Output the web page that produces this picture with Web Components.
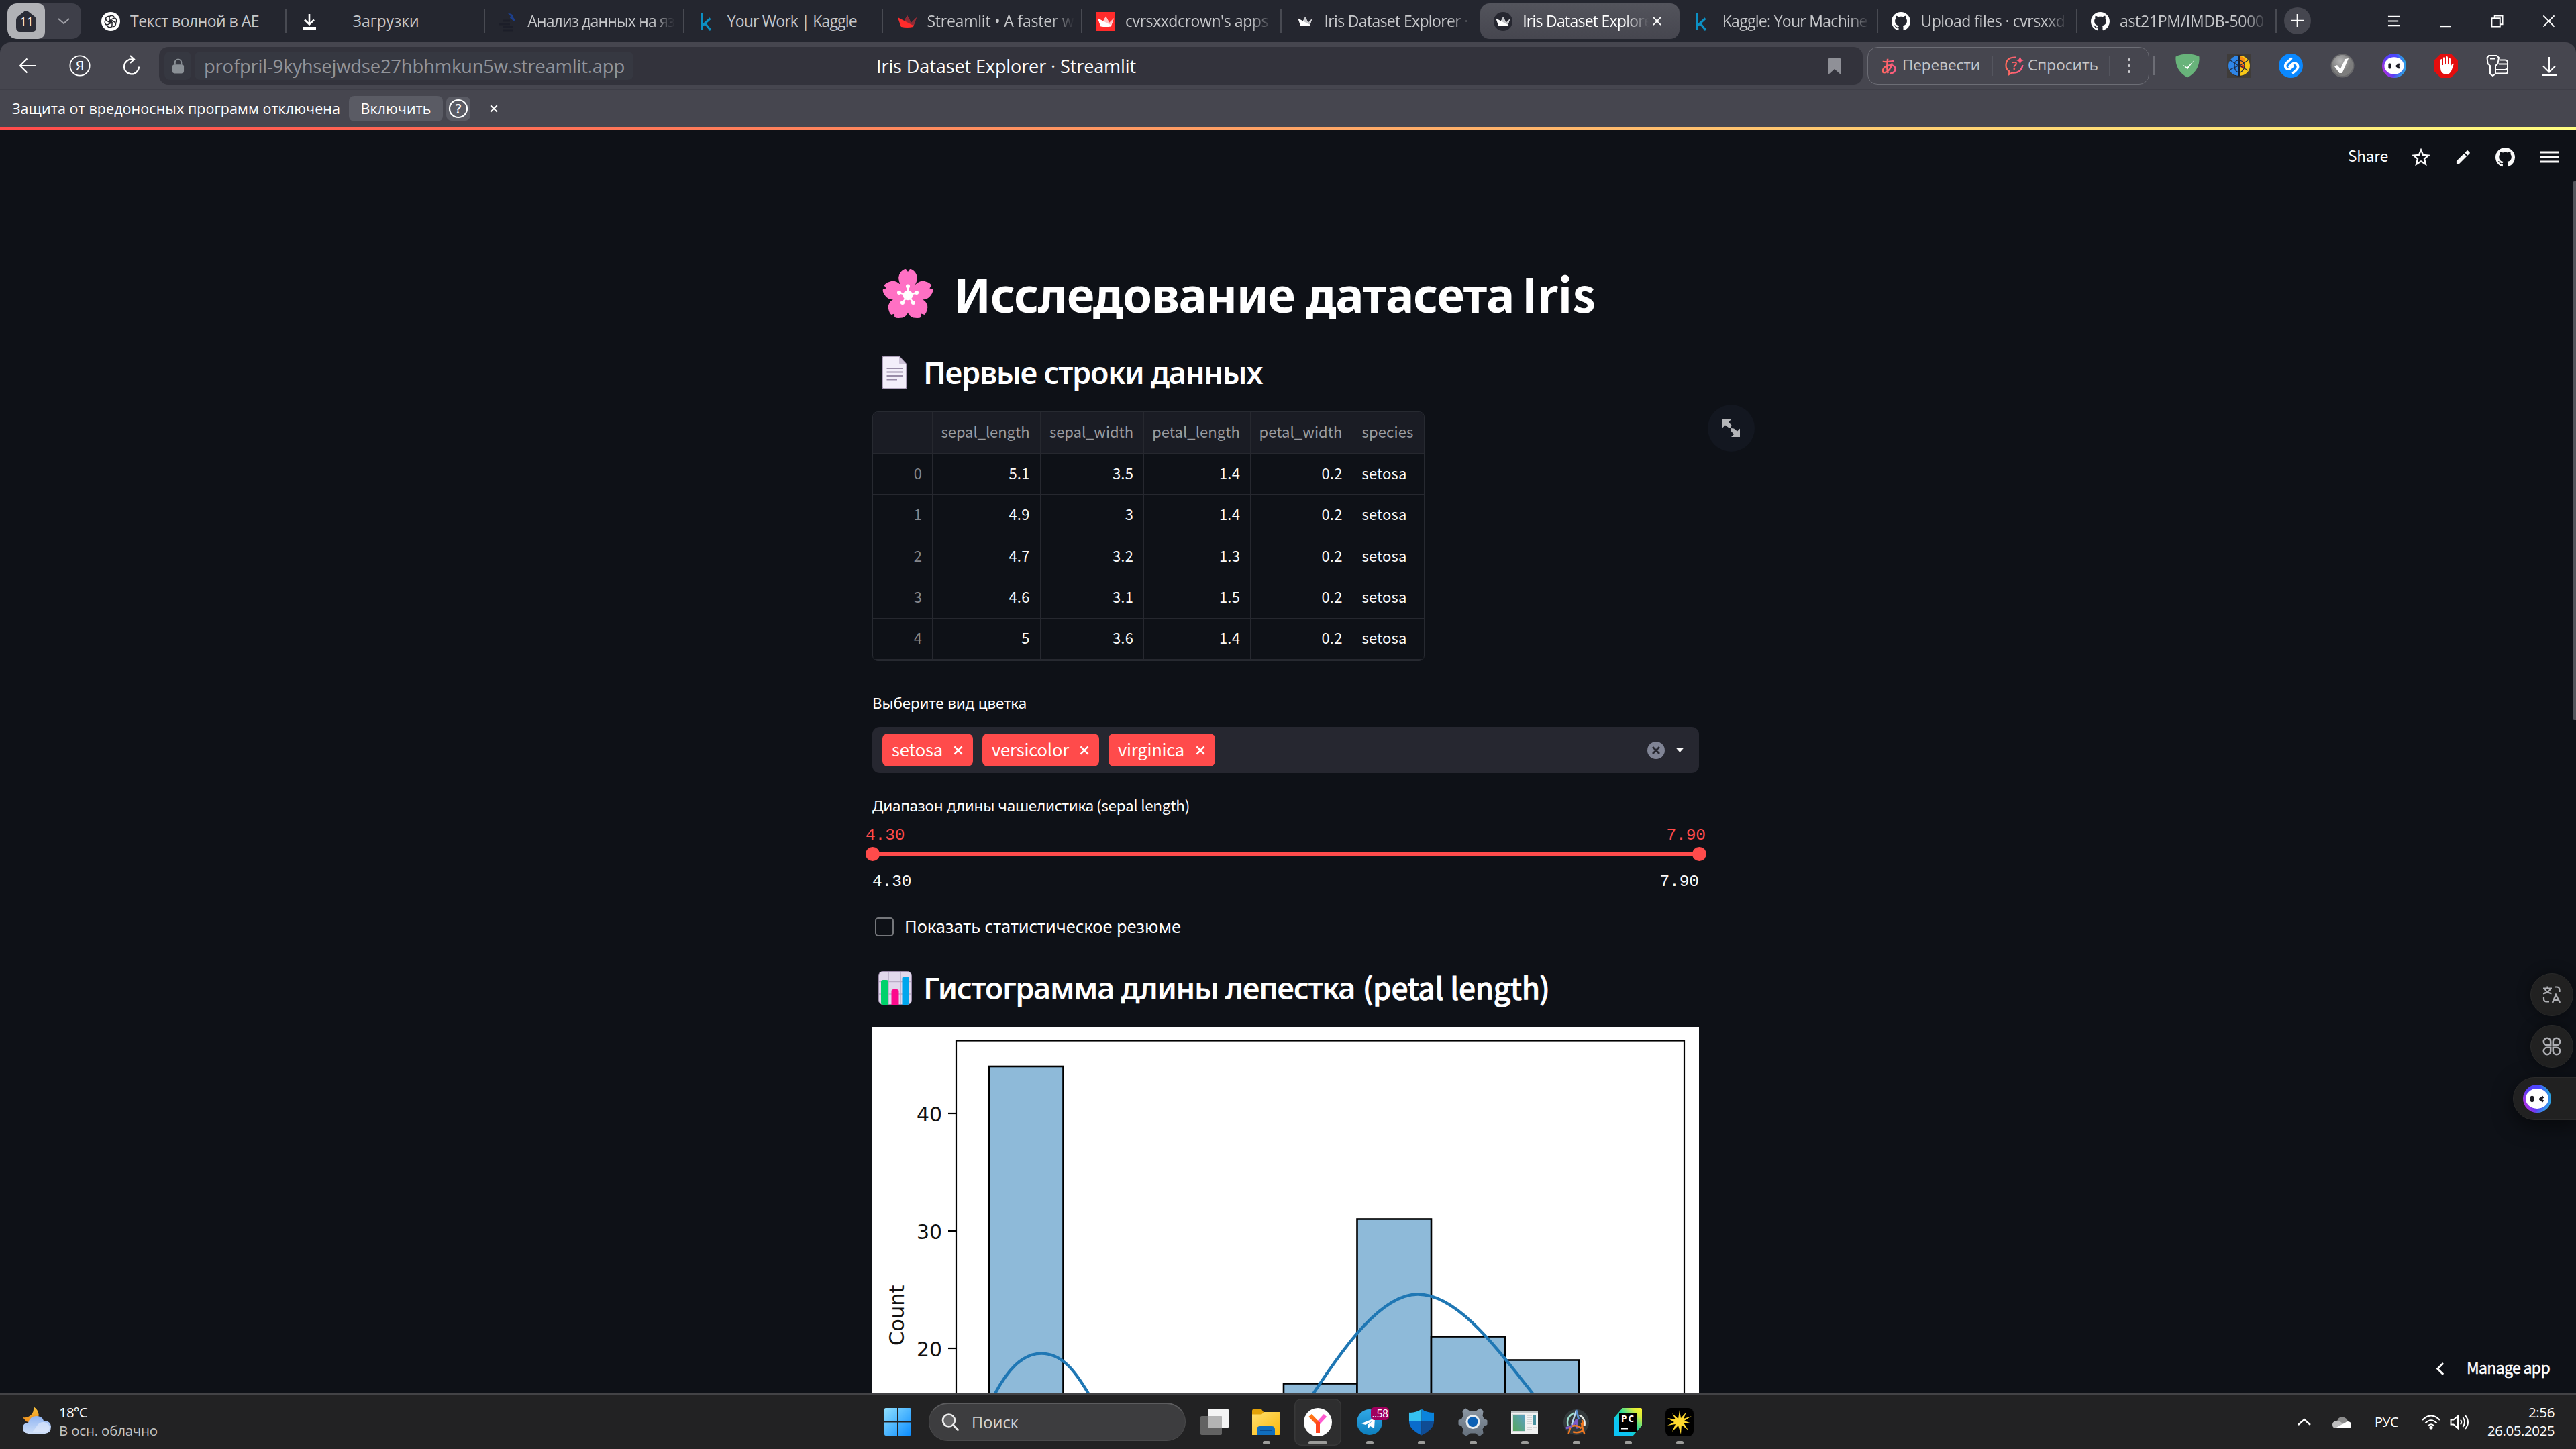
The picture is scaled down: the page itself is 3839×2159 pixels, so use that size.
<!DOCTYPE html>
<html lang="ru">
<head>
<meta charset="utf-8">
<title>Iris Dataset Explorer · Streamlit</title>
<style>
html,body{margin:0;padding:0;background:#0e1117;overflow:hidden}
body{width:3839px;height:2159px;display:flex;flex-direction:column;font-family:"Open Sans","Noto Sans",sans-serif}
</style>
</head>
<body>
<browser-tabs></browser-tabs>
<browser-toolbar></browser-toolbar>
<info-bar></info-bar>
<app-page></app-page>
<task-bar></task-bar>
<script>
const GH='<path fill="currentColor" d="M8 0C3.58 0 0 3.58 0 8c0 3.54 2.29 6.53 5.47 7.59.4.07.55-.17.55-.38 0-.19-.01-.82-.01-1.49-2.01.37-2.53-.49-2.69-.94-.09-.23-.48-.94-.82-1.13-.28-.15-.68-.52-.01-.53.63-.01 1.08.58 1.23.82.72 1.21 1.87.87 2.33.66.07-.52.28-.87.51-1.07-1.78-.2-3.64-.89-3.64-3.95 0-.87.31-1.59.82-2.15-.08-.2-.36-1.02.08-2.12 0 0 .67-.21 2.2.82.64-.18 1.32-.27 2-.27.68 0 1.36.09 2 .27 1.53-1.04 2.2-.82 2.2-.82.44 1.1.16 1.92.08 2.12.51.56.82 1.27.82 2.15 0 3.07-1.87 3.75-3.65 3.95.29.25.54.73.54 1.48 0 1.07-.01 1.93-.01 2.2 0 .21.15.46.55.38A8.013 8.013 0 0016 8c0-4.42-3.58-8-8-8z"/>';
const crown=(a,b,c)=>`<path fill="${a}" d="M0 6L8 14 14 3 20 14 28 6 23 20H5z"/><path fill="${b}" d="M14 3L20 14 28 6 23 18 8 14z"/><path fill="${c}" d="M0 6L23 18 23 20Q14 22 5 20z"/>`;
const face='<defs><linearGradient id="f" x1="0" y1=".8" x2="1" y2=".3"><stop offset="0" stop-color="#c32ee0"/><stop offset=".35" stop-color="#5a3df5"/><stop offset=".75" stop-color="#4a46ff"/><stop offset="1" stop-color="#20b8d8"/></linearGradient><linearGradient id="g" x1=".3" y1=".5" x2=".9" y2="1"><stop offset=".5" stop-color="#20d0d8" stop-opacity="0"/><stop offset="1" stop-color="#20d8d0"/></linearGradient></defs><circle cx="18" cy="18" r="18" fill="url(#f)"/><circle cx="18" cy="18" r="18" fill="url(#g)"/><ellipse cx="18" cy="18" rx="14.6" ry="12.8" fill="#fff"/><rect x="9.4" y="14.4" width="4.4" height="8" rx="2" fill="#1b1b24"/><path d="M26 15.5l-4.2 3 4.2 3" fill="none" stroke="#1b1b24" stroke-width="2.8" stroke-linejoin="round"/>';
const S='fill="none" stroke="currentColor"';
/* name: [viewBox, markup] */
const ICONS={
home:['0 0 30 32','<path fill="#2a2c36" d="M15 0Q17 0 19 2L28 9Q30 11 30 14V25Q30 31 24 31H6Q0 31 0 25V14Q0 11 2 9L11 2Q13 0 15 0z"/>'],
chev:['0 0 20 12',`<path ${S} stroke-width="2" d="M2 2l8 7 8-7"/>`],
gpt:['0 0 28 28','<circle cx="14" cy="14" r="14" fill="#fff"/><g fill="none" stroke="#25262c" stroke-width="1.5"><path d="M12 13V8.6Q12 5.4 15 5.2 18 5.2 19.4 8M12 13l4.5 2.6"/><g><path transform="rotate(60 14 14)" d="M12 13V8.6Q12 5.4 15 5.2 18 5.2 19.4 8M12 13l4.5 2.6"/><path transform="rotate(120 14 14)" d="M12 13V8.6Q12 5.4 15 5.2 18 5.2 19.4 8M12 13l4.5 2.6"/><path transform="rotate(180 14 14)" d="M12 13V8.6Q12 5.4 15 5.2 18 5.2 19.4 8M12 13l4.5 2.6"/><path transform="rotate(240 14 14)" d="M12 13V8.6Q12 5.4 15 5.2 18 5.2 19.4 8M12 13l4.5 2.6"/><path transform="rotate(300 14 14)" d="M12 13V8.6Q12 5.4 15 5.2 18 5.2 19.4 8M12 13l4.5 2.6"/></g></g>'],
dl:['0 0 28 28','<path fill="none" stroke="#fff" stroke-width="2.6" d="M14 3v15M7 11.5l7 7 7-7"/><path fill="#fff" d="M4 22h20v4H4z"/>'],
stepik:['0 0 28 28','<g fill="none" stroke="#1c1e29" stroke-width="3"><path d="M0 18h17M7 13h10M7 22h15M7 27h14"/></g><path fill="#1c3f8d" d="M14 2q8 0 8 6l3 4-3 2q-2-4-5-5l1-3z"/>'],
kag:['0 0 28 28','<path fill="none" stroke="#0c90c4" stroke-width="3.200" d="M8 1v26M20.500 9.500L9 20M12.500 16.500L21 27"/>'],
crownR:['0 0 28 28',`<g transform="translate(0 2)">${crown('#c8343c','#8e2b36','#ff2b2b')}</g>`],
crownSq:['0 0 28 28',`<path fill="#ff2b2b" d="M0 0h28v28H0z"/><g transform="translate(2 4) scale(.86)">${crown('#fff','#ffc4c4','#fff')}</g>`],
crownK:['0 0 28 28',`<circle cx="14" cy="14" r="14" fill="#262730"/><g transform="translate(3.5 5) scale(.76)">${crown('#fff','#c4c5c9','#fff')}</g>`],
gh:['0 0 16 16',GH],
x:['0 0 20 20',`<path ${S} stroke-width="2" d="M1.5 1.5l17 17M18.500 1.500l-17 17"/>`],
xs:['0 0 14 14',`<path ${S} stroke-width="2" d="M1 1l12 12M13 1L1 13"/>`],
xb:['0 0 20 20',`<path ${S} stroke-width="3.4" d="M2 2l16 16M18 2L2 18"/>`],
plus:['0 0 20 20',`<path ${S} stroke-width="1.8" d="M10 0v20M0 10h20"/>`],
burger:['0 0 20 20',`<path ${S} stroke-width="2.2" d="M1 3h18M1 10h16M1 17h18"/>`],
min:['0 0 20 20',`<path ${S} stroke-width="2.4" d="M1.500 18h17"/>`],
rest:['0 0 20 20',`<path ${S} stroke-width="2" d="M1.500 5.500h13v13h-13zM6 5V1.500h12.500V15H15"/>`],
back:['0 0 32 32',`<path ${S} stroke-width="2.2" d="M29 16H5M15.500 5.500L5 16l10.500 10.500"/>`],
ya:['0 0 32 32',`<circle cx="16" cy="16" r="14.600" ${S} stroke-width="1.900"/><text x="16" y="23" text-anchor="middle" font-size="20" font-family="Open Sans" fill="currentColor">Я</text>`],
reload:['0 0 32 32',`<path ${S} stroke-width="2.200" d="M17 6.500A11 11 0 1 0 27 17.500M12 6.500h8M14 1l6 5.500-6 5.500"/>`],
lock:['0 0 20 24','<path fill="none" stroke="#8a9096" stroke-width="2.200" d="M5 10V6.500a5 5 0 0110 0V10"/><rect x="1" y="9.500" width="18" height="14" rx="3.500" fill="#8a9096"/>'],
mark:['0 0 18 25','<path fill="#8f9097" d="M0 2Q0 0 2 0H16Q18 0 18 2V25L9 17 0 25z"/>'],
ask:['0 0 28 28','<defs><linearGradient id="a"><stop stop-color="#ff6a5a"/><stop offset="1" stop-color="#ff5a8a"/></linearGradient></defs><path fill="none" stroke="url(#a)" stroke-width="2.200" d="M16 1.500Q1.500 1 1.500 14 1.500 19 6.500 22.500L6 27 10.500 24.500Q24 25.500 26.500 13"/><path fill="#ff5a7a" d="M22.500 0l1.700 4.300L28 6l-3.800 1.700L22.500 12l-1.700-4.300L17 6l3.800-1.700z"/><text x="14" y="19.500" text-anchor="middle" font-size="17" font-family="Open Sans" font-weight="600" fill="#ff6268">?</text>'],
shield:['0 0 36 36','<path fill="#68b37a" d="M18 .500Q28 .500 35.500 4.500Q37 25 18 35.500Q-1 25 .500 4.500Q8 .500 18 .500z"/><path fill="#fff" d="M10.500 16l7 4.500L28.500 9 18 23.500z"/>'],
brain:['0 0 36 36','<path fill="#3f3c3a" d="M0 0h36v36H0z"/><circle cx="18" cy="18" r="15.500" fill="#1b1a1a"/><path fill="#2f86e8" d="M17 3A15 15 0 0 0 17 33z"/><path fill="#f8c818" d="M19 3A15 15 0 0 1 19 33z"/><path fill="#fb8c12" d="M19 4q9 1 8 9l-8 6z"/><path fill="#e8381c" d="M19 19l5-3 3 4-3 3z"/><g fill="none" stroke="#1c2a44" stroke-width="1.200"><path d="M17 18L5 10M17 18L4 24M17 10q-6 0-6 8t6 10M19 18l12-8M19 18l12 7M19 10q7 2 7 8t-6 10M18 3v30"/></g>'],
shaz:['0 0 36 36','<circle cx="18" cy="18" r="18" fill="#0a88ff"/><g fill="none" stroke="#fff" stroke-width="3.600" stroke-linecap="round"><path d="M18.500 7.500l-7 6.500q-4 4.500 0 8 3.200 2.500 6.500-.500l3-2.800"/><path d="M21.500 28.500l4-3.500q5.500-5 1.500-9.500-3.500-3-7 .200l-4 3.600" /></g>'],
gray:['0 0 36 36','<defs><radialGradient id="r" cx=".4" cy=".3"><stop stop-color="#b5b5b5"/><stop offset="1" stop-color="#7d7d7d"/></radialGradient></defs><circle cx="18" cy="18" r="17.500" fill="#6a6a6c"/><circle cx="18" cy="17.500" r="15.500" fill="url(#r)"/><path fill="#fff" d="M6 19l4-2 5 5.500L22 8l5-1-9.500 22h-4z"/>'],
face:['0 0 36 36',face],
stop:['0 0 36 36','<path fill="#e40d0d" d="M10.500 0h15L36 10.500v15L25.500 36h-15L0 25.500v-15z"/><path fill="#fff" d="M10 10q0-2 1.500-2t1.500 2v7h1V7q0-2 1.500-2t1.500 2v9h1V6q0-2 1.500-2T21 6v10h1V8.500q0-2 1.500-2t1.500 2V20l2-4q1-2 3-1l-3.500 10q-2 5.500-8 5.500-8.500 0-8.500-9z"/>'],
key:['0 0 36 36',`<g ${S} stroke-width="2"><path d="M5 3h12l3 3-1.500 9-3.500 3v12l-4 3-4-3V18l-3.500-3L2.500 6zM7 7.500h8"/><path d="M21 9.500h8q4 0 4 4V27q0 2.500-3 2.500H16M20 15.500h13M16 24h13q4-.500 4-3"/></g>`],
down:['0 0 36 36',`<path ${S} stroke-width="2" d="M18 5v22M9 18.500l9 9 9-9M7 32h22"/>`],
q:['0 0 36 36',`<circle cx="18" cy="18" r="13" ${S} stroke-width="2.200"/><text x="18" y="25" text-anchor="middle" font-size="19" font-family="Open Sans" font-weight="600" fill="currentColor">?</text>`],
star:['0 0 28 28',`<path ${S} stroke-width="2.400" stroke-linejoin="miter" d="M14 3.500l3.100 7.400 8 .700-6.100 5.300 1.900 7.800L14 20.500l-6.900 4.200L9 16.900l-6.100-5.300 8-.700z"/>`],
pen:['0 0 24 24','<path fill="currentColor" d="M1 18.500V23h4.500L17.500 11 13 6.500zM19 9.500l3.500-3.500q.700-.800 0-1.500l-3-3q-.700-.700-1.500 0L14.500 5z"/>'],
menu:['0 0 28 20',`<path ${S} stroke-width="3" d="M0 3h28M0 10h28M0 17h28"/>`],
flower:['0 0 76 76','<g fill="#ff70c4"><path d="M38 38Q18 18 27 6Q31 1 35 1L38 5L41 1Q45 1 49 6Q58 18 38 38z"/><path transform="rotate(72 38 40)" d="M38 40Q18 20 27 8Q31 2 35 2L38 6L41 2Q45 2 49 8Q58 20 38 40z"/><path transform="rotate(144 38 40)" d="M38 40Q16 20 25 8Q31 2 35 2L38 6L41 2Q45 2 51 8Q60 20 38 40z"/><path transform="rotate(216 38 40)" d="M38 40Q16 20 25 8Q31 2 35 2L38 6L41 2Q45 2 51 8Q60 20 38 40z"/><path transform="rotate(288 38 40)" d="M38 40Q18 20 27 8Q31 2 35 2L38 6L41 2Q45 2 49 8Q58 20 38 40z"/><circle cx="38" cy="40" r="18"/></g><g stroke="#fff" stroke-width="2.500" fill="#fff"><circle cx="38" cy="40" r="6"/><path d="M38 40V27M38 40l13-4M38 40l8 11M38 40l-8 11M38 40l-13-4"/><circle cx="38" cy="26.500" r="1.800"/><circle cx="51" cy="36" r="1.800"/><circle cx="46" cy="51" r="1.800"/><circle cx="30" cy="51" r="1.800"/><circle cx="25" cy="36" r="1.800"/></g>'],
doc:['0 0 38 50','<path fill="#f3eefa" stroke="#9a8ba8" stroke-width="1.500" d="M3 1H26L37 13V47Q37 49 35 49H3Q1 49 1 47V3Q1 1 3 1z"/><path fill="#cdc2d8" d="M26 1L37 13H28Q26 13 26 11z"/><path fill="none" stroke="#998ca8" stroke-width="1.900" d="M7.500 19h24M7.500 24.500h24M7.500 30h24M7.500 35.500h15.500"/>'],
bars:['0 0 50 50','<rect x=".5" y=".5" width="49" height="49" rx="6" fill="#e1d8ec" stroke="#9b8aa9"/><path stroke="#b9acc6" stroke-width="1.500" d="M15 1v48M33 1v48M1 15.500h48M1 34h48"/><path fill="#00d26a" d="M4 16q0-3 3-3h5q3 0 3 3v34H7q-3 0-3-3z"/><path fill="#fc0a8c" d="M19.500 30q0-3 3-3h5q3 0 3 3v20h-11z"/><path fill="#00a6ed" d="M35.500 11q0-3 3-3h4q3 0 3 3v36q0 3-3 3h-7z"/>'],
expand:['0 0 26 26','<path fill="#b4b5b8" d="M0 0h13L9 4l4.500 4.500-1 4-3.500-.500L4 8.500 0 12.500zM26 26H13l4-4-4.500-5 .500-4 4 .500L22 17.500l4-4z"/>'],
clear:['0 0 26 26','<circle cx="13" cy="13" r="13" fill="#808495"/><path stroke="#262730" stroke-width="2.800" d="M8 8l10 10M18 8L8 18"/>'],
caret:['0 0 14 8','<path fill="#fafafa" d="M0 0h14L7 8z"/>'],
tr:['0 0 28 28','<g fill="none" stroke="#aeafb4" stroke-width="2.200"><path d="M1 4.500h13M7.500 1.500v3M3.500 5q1.500 5 10 7.500M12 5q-2 5-11 7.500M18 2.500h3q4.500 0 4.500 4.500v3M2 17v3.500q0 4 4.500 4H10"/><path d="M15 26l5-12 6 12M17 22h8" stroke-width="2.500"/></g>'],
clover:['0 0 28 28','<g fill="none" stroke="#aeafb4" stroke-width="2.600"><path d="M12.200 12.200H7a5.200 5.200 0 1 1 5.200-5.200zM15.800 12.200V7a5.200 5.200 0 1 1 5.200 5.200zM12.200 15.800V21A5.200 5.200 0 1 1 7 15.800zM15.800 15.800H21a5.200 5.200 0 1 1-5.200 5.200z"/></g>'],
left:['0 0 14 22',`<path ${S} stroke-width="3.200" d="M12 2L3 11l9 9"/>`],
weather:['0 0 42 40','<defs><linearGradient id="w" x2="0" y2="1"><stop stop-color="#f7c33c"/><stop offset="1" stop-color="#f08a18"/></linearGradient><linearGradient id="c" x2="0" y2="1"><stop stop-color="#8fb4f2"/><stop offset="1" stop-color="#cfdff8"/></linearGradient></defs><path fill="url(#w)" d="M16 0Q26 6 23 17T5 22L0 16Q8 17 12.500 12T16 0z"/><path fill="url(#c)" d="M8 40Q0 39 0 31.500T8 24Q11 14 20 14t11 7q10-.500 11 8.500 0 9.500-9 10.500z"/><path fill="#e2ebfb" opacity=".6" d="M20 30q4-8 12-7 8 2 8 9-2 6-8 6H14z"/>'],
win:['0 0 40 41','<defs><linearGradient id="b" x2="1" y2="1"><stop stop-color="#90e0ff"/><stop offset="1" stop-color="#0a8cff"/></linearGradient></defs><path fill="url(#b)" d="M2 0h17v19.500H0V2Q0 0 2 0zM21 0h17q2 0 2 2v17.500H21zM0 21.500h19V41H2q-2 0-2-2zM21 21.500h19V39q0 2-2 2H21z"/>'],
search:['0 0 26 26','<circle cx="11" cy="10.500" r="9" fill="#646466" stroke="#ececec" stroke-width="2.600"/><path stroke="#ececec" stroke-width="3" stroke-linecap="round" d="M17.500 17l7 7.500"/>'],
views:['0 0 42 40','<rect x="11" y="0" width="31" height="29" rx="2" fill="#f4f4f4"/><rect x="0" y="11" width="32" height="28" rx="2" fill="#626262"/><path fill="#b4b4b4" d="M11 11h19q2 0 2 2v16H11z"/>'],
folder:['0 0 42 38','<defs><linearGradient id="d" x2="1" y2="1"><stop stop-color="#ffdf70"/><stop offset="1" stop-color="#fbb90a"/></linearGradient></defs><path fill="#e2a108" d="M0 2Q0 0 2 0h12l3 4h25v10H0z"/><path fill="url(#d)" d="M0 7.500h14L18 4h23q1 0 1 1v31q0 2-2 2H0z"/><path fill="#106ebe" d="M7 38V30q0-5 5-5h17q5 0 5 5v8z"/><path stroke="#0a4c90" stroke-width="2" d="M12 31h17"/>'],
yb:['0 0 42 42','<defs><linearGradient id="y1" x2="0" y2="1"><stop stop-color="#ff7a14"/><stop offset="1" stop-color="#ff2d20"/></linearGradient></defs><circle cx="21" cy="21" r="21" fill="#fff"/><path fill="none" stroke="#ff5ad0" stroke-width="6" d="M21 23L32 11"/><path fill="none" stroke="url(#y1)" stroke-width="6" d="M9.500 11L21 23V37" /><path stroke="#ff4420" stroke-width="6" d="M21 21v16"/>'],
tg:['0 0 38 38','<defs><linearGradient id="t" x2="0" y2="1"><stop stop-color="#31a8e6"/><stop offset="1" stop-color="#0d7fbe"/></linearGradient></defs><circle cx="19" cy="19" r="19" fill="url(#t)"/><path fill="#fff" d="M7 21L27 13 26 28 20 25 17 28 16 23 24 17 13 23z"/>'],
def:['0 0 40 40','<path fill="#35c1f1" d="M20 0Q12 6 1 5.500V19h19z"/><path fill="#0a84dc" d="M20 0Q28 6 39 5.500V19H20z"/><path fill="#0a6ccc" d="M1 19h19v21Q1 31 1 19z"/><path fill="#0f4c94" d="M39 19H20v21Q39 31 39 19z"/>'],
gear:['0 0 42 42','<defs><linearGradient id="e" x2="0" y2="1"><stop stop-color="#8c97a3"/><stop offset="1" stop-color="#66717d"/></linearGradient></defs><path fill="url(#e)" stroke="url(#e)" stroke-width="3" stroke-linejoin="round" d="M10 2l6 4h10l6-4 3 3-1 7 3 6 4 1v5l-4 1-3 6 1 6-4 3-6-4H17l-6 4-4-3 1-6-3-6-4-1v-5l4-1 3-6-1-7z"/><circle cx="21" cy="20.500" r="10.500" fill="#e9edf0"/><circle cx="21" cy="20.500" r="7.500" fill="#0c60b4"/>'],
app:['0 0 40 34','<path fill="#f1f2f2" d="M0 1h40v33H0z"/><path fill="#bfc3c5" d="M0 1h40v2.500H0z"/><defs><linearGradient id="h" x1="1" x2="0" y2="1"><stop stop-color="#5b9fc4"/><stop offset="1" stop-color="#58a85c"/></linearGradient></defs><path fill="#d5dadb" d="M2 5h19v26H2z"/><path fill="url(#h)" d="M3 6h17v24H3z"/><path stroke="#b6b9bb" stroke-width="1.200" d="M24 7h7M24 10h7M24 13h7M24 16h7M24 19h7M24 25h7M24 28h7M33 25h5"/><path fill="#4a92a0" d="M33 6h4v15h-4z"/>'],
aapp:['0 0 42 42','<circle cx="21" cy="21" r="20" fill="#343a3c"/><g fill="none" stroke-width="2.600"><path stroke="#a0e0d0" d="M17 7Q5 13 8 27"/><path stroke="#7b5ac8" stroke-width="3.500" d="M5 30q13-1 17-14v15"/><path stroke="#e8ece8" d="M26 10q10 5 8 17"/><path stroke="#f07820" d="M12 29l-3 10M14 27q9-2 14 3 6-4 2-12M29 22l5 18M16 36q9 3 17-3"/><path stroke="#b8d8f0" d="M21 3l-7 22"/><path stroke="#5b8fd0" stroke-width="3" d="M21 2l4 15"/></g>'],
pc:['0 0 42 42','<defs><linearGradient id="k" x1="1" y1="0" x2="0" y2="1"><stop stop-color="#fff32a"/><stop offset=".18" stop-color="#d8ee3c"/><stop offset=".45" stop-color="#22d8a0"/><stop offset=".7" stop-color="#0cc4f4"/></linearGradient></defs><path fill="url(#k)" d="M13 0H40q2 0 2 2V26L28 42H0V15z"/><path fill="#000" d="M8 8h27v27H8z"/><text x="11" y="21" font-size="13.500" font-weight="700" font-family="Open Sans" fill="#fff" textLength="19">PC</text><path fill="#fff" d="M11 29h10v2.500H11z"/>'],
burst:['0 0 42 42','<rect width="42" height="42" rx="8" fill="#000"/><path fill="#ffd92e" d="M21 3l2 12 8-9-4 10 12-4-11 7 11 4-12-1 7 11-10-8-1 14-4-13-9 9 5-11-12 2 10-5-10-6 12 2-5-9 9 8z"/>'],
up:['0 0 28 28',`<path ${S} stroke-width="2.400" d="M5 18l9-8 9 8"/>`],
cloud:['0 0 28 20','<path fill="#8c8c8c" d="M7 9Q9 1 16 2.500 22 4 23 9L12 14z"/><path fill="#bdbdbd" d="M4 19q-4-1-4-5.500T6 8q4-1 8 3l8 7z"/><path fill="#fff" d="M4 19L22 9q6 0 6 5t-4 5z"/>'],
wifi:['0 0 28 22',`<g ${S} stroke-width="2.200"><path d="M1 8Q14-5 27 8M5.500 12.500Q14 4 22.500 12.500M9.500 16.500q4.500-4.500 9 0"/></g><circle cx="14" cy="19" r="2.600" fill="currentColor"/>`],
vol:['0 0 29 24',`<g ${S} stroke-width="2"><path d="M1.500 8.500h4L12 3v18l-6.500-5.500h-4zM16 8.500q2.500 3.500 0 7M19.500 5q5 7 0 14M23 2q8 10 0 20"/></g>`]
};
const def=(tag,html,after)=>customElements.define(tag,class extends HTMLElement{
  constructor(){super();this.attachShadow({mode:'open'})}
  connectedCallback(){this.shadowRoot.innerHTML=typeof html==='function'?html(this):html;if(after)after(this)}
});
/* <ui-icon name w h> */
def('ui-icon',e=>{const [vb,m]=ICONS[e.getAttribute('name')];const w=e.getAttribute('w'),h=e.getAttribute('h')||w;
 return `<style>:host{display:block;flex:none;width:${w}px;height:${h}px}svg{display:block;overflow:visible}</style><svg width="${w}" height="${h}" viewBox="${vb}">${m}</svg>`});
/* Single line of text tracked to an exact advance width: w = width, s = size, c = colour, b = weight, k = outline that thickens the stems, f = family key */
const FF={sans:'"Open Sans","Noto Sans",sans-serif',noto:'"Noto Sans",sans-serif',src:'"Noto Sans CJK JP","Noto Sans",sans-serif',mono:'"Liberation Mono",monospace'};
def('fit-text',e=>{const g=(a,d)=>e.getAttribute(a)||d;
 return `<style>:host{display:block;flex:none;white-space:pre;line-height:${g('lh','1.3')};font-family:${FF[g('f','sans')]};font-size:${g('s','23')}px;font-weight:${g('b','400')};color:${g('c','#fff')};-webkit-text-stroke:${g('k','0')}px currentColor}span{display:inline-block}</style><span><slot></slot></span>`},
 e=>{const w=+e.getAttribute('w');if(!w)return;const s=e.shadowRoot.querySelector('span');const n=[...e.textContent].length;
  s.style.letterSpacing=((w-s.getBoundingClientRect().width)/n)+'px';e.style.width=w+'px'});

def('tab-item',e=>`<style>
:host{display:flex;align-items:center;flex:none;box-sizing:border-box;width:296.600px;height:35px;padding-left:20px;border-right:2px solid ${e.hasAttribute('nb')?'transparent':'#484a52'}}
:host([active]){height:53px;border-radius:14px;background:linear-gradient(#53545c,#46464f);border:0;padding-left:20px;color:#fff}
.t{margin-left:${e.getAttribute('gap')||15}px;width:222px}
.t.fade{overflow:hidden;-webkit-mask-image:linear-gradient(90deg,#000 186px,transparent 220px);mask-image:linear-gradient(90deg,#000 186px,transparent 220px)}
:host([active]) .t{width:194px;-webkit-mask-image:linear-gradient(90deg,#000 150px,transparent 188px);mask-image:linear-gradient(90deg,#000 150px,transparent 188px)}
</style><ui-icon name="${e.getAttribute('icon')}" w="28" style="color:#fff"></ui-icon><div class="t ${e.hasAttribute('fade')?'fade':''}"><fit-text s="23" lh="1.6" w="${e.getAttribute('w')}" c="${e.hasAttribute('active')?'#fff':'#c6c7ca'}">${e.getAttribute('label')}</fit-text></div>${e.hasAttribute('active')?'<ui-icon name="xs" w="13" style="color:#fff"></ui-icon>':''}`);

def('browser-tabs',`<style>
:host{display:flex;height:63px;flex:none;background:#24262f;align-items:center;color:#fff}
.g{display:flex;width:110px;height:53px;margin-left:11px;border-radius:14px;background:#3e3f49;overflow:hidden;align-items:center;color:#a0a1a8}
.h{width:56px;height:53px;background:#b1b2b6;display:flex;align-items:center;justify-content:center;border-radius:14px 10px 10px 14px}
.hh{display:grid;justify-items:center;align-items:center}.hh>*{grid-area:1/1}
.n{display:flex;justify-content:center;align-items:center;width:40px;height:40px;border-radius:50%;background:#45464f;margin-left:11px;margin-top:-2px}
</style>
<div class="g"><div class="h"><div class="hh"><ui-icon name="home" w="30" h="32"></ui-icon><fit-text s="18" w="20" style="margin:3px 0 0 1px">11</fit-text></div></div><ui-icon name="chev" w="20" h="12" style="margin-left:18px"></ui-icon></div>
<tab-item style="margin-left:9px;padding-left:21px" icon="gpt" label="Текст волной в AE" w="192"></tab-item><tab-item icon="dl" gap="51" label="Загрузки" w="99"></tab-item><tab-item icon="stepik" fade label="Анализ данных на яз" w="219"></tab-item><tab-item icon="kag" gap="18" style="padding-left:18px" label="Your Work | Kaggle" w="193"></tab-item><tab-item style="padding-left:22px" icon="crownR" fade label="Streamlit • A faster w" w="219"></tab-item><tab-item style="padding-left:21px" icon="crownSq" fade label="cvrsxxdcrown's apps" w="213"></tab-item><tab-item nb style="padding-left:21px" icon="crownK" fade label="Iris Dataset Explorer ·" w="214"></tab-item><tab-item active icon="crownK" label="Iris Dataset Explore" w="193"></tab-item><tab-item style="padding-left:18px" icon="kag" gap="18" fade label="Kaggle: Your Machine" w="216"></tab-item><tab-item icon="gh" fade label="Upload files · cvrsxxd" w="215"></tab-item><tab-item icon="gh" fade label="ast21PM/IMDB-5000" w="215"></tab-item>
<div class="n"><ui-icon name="plus" w="19"></ui-icon></div>
<ui-icon name="burger" w="19" style="margin-left:114px"></ui-icon><ui-icon name="min" w="19" style="margin-left:58px"></ui-icon><ui-icon name="rest" w="19" style="margin-left:58px"></ui-icon><ui-icon name="x" w="19" style="margin-left:58px"></ui-icon>`);

def('browser-toolbar',`<style>
:host{display:block;flex:none;height:71px;background:#24262f}
.bar{display:flex;align-items:center;height:70px;background:#46464f;border-radius:16px 16px 0 0;border-bottom:1px solid #3e3e47;color:#fff}
.addr{display:flex;align-items:center;box-sizing:border-box;width:2539px;height:56px;border-radius:14px;background:#33333c;margin-left:25px;padding:0 33px 0 8px}
.lk{width:40px;height:42px;border-radius:8px;background:#363841;display:flex;align-items:center;justify-content:center}
.chip{box-sizing:border-box;width:654px;height:42px;border-radius:8px;background:#363841;margin-left:5px;padding-left:14px;display:flex;align-items:center}
.grp{box-sizing:border-box;display:flex;align-items:center;width:420px;height:56px;border:1.500px solid #6c6d75;border-radius:15px;margin-left:7px}
.ja{font:500 26px/30px "Noto Sans CJK JP";width:26px;margin-left:18px;background:linear-gradient(90deg,#ff6a5a,#ff5a8a);-webkit-background-clip:text;background-clip:text;color:transparent}
.v{width:1px;height:30px;background:#54555e}
.dots{display:grid;gap:5px;margin-left:27px}.dots i{width:4px;height:4px;border-radius:50%;background:#cfcfd2}
.ex{display:flex;gap:41px;margin-left:31px}
</style><div class="bar"><ui-icon name="back" w="32" style="margin-left:25px"></ui-icon><ui-icon name="ya" w="32" style="margin-left:46px"></ui-icon><ui-icon name="reload" w="32" style="margin-left:45px"></ui-icon>
<div class="addr"><div class="lk"><ui-icon name="lock" w="19" h="23"></ui-icon></div><div class="chip"><fit-text s="27.500" w="627" c="#92949a" style="margin-top:2px">profpril-9kyhsejwdse27hbhmkun5w.streamlit.app</fit-text></div><fit-text s="27" w="387" style="margin:2px 0 0 362px">Iris Dataset Explorer · Streamlit</fit-text><ui-icon name="mark" w="18" h="25" style="margin-left:auto"></ui-icon></div>
<div class="grp"><div class="ja">あ</div><fit-text s="22.500" w="116" c="#c6c6ca" style="margin:-3px 0 0 7px">Перевести</fit-text><div class="v" style="margin-left:18px"></div><ui-icon name="ask" w="28" style="margin-left:18px"></ui-icon><fit-text s="22.500" w="105" c="#c6c6ca" style="margin:-3px 0 0 6px">Спросить</fit-text><div class="v" style="margin-left:16px"></div><div class="dots"><i></i><i></i><i></i></div></div>
<div style="width:2px;height:28px;background:#6c6d75;margin-left:6px"></div>
<div class="ex"><ui-icon name="shield" w="36"></ui-icon><ui-icon name="brain" w="36"></ui-icon><ui-icon name="shaz" w="36"></ui-icon><ui-icon name="gray" w="36"></ui-icon><ui-icon name="face" w="36"></ui-icon><ui-icon name="stop" w="36"></ui-icon><ui-icon name="key" w="36"></ui-icon><ui-icon name="down" w="36"></ui-icon></div></div>`);

def('info-bar',`<style>:host{display:flex;flex:none;align-items:center;height:55px;background:#46464f;color:#fff}
.b{width:140px;height:38px;border-radius:8px;background:#5a5b64;margin-left:13px;display:flex;align-items:center;justify-content:center}
.q{width:36px;height:36px;border-radius:8px;background:#5a5b64;margin-left:5px}</style>
<fit-text s="21.500" w="489" style="margin-left:18px">Защита от вредоносных программ отключена</fit-text><div class="b"><fit-text s="21.500" w="105">Включить</fit-text></div><div class="q"><ui-icon name="q" w="36"></ui-icon></div><ui-icon name="xb" w="12" style="margin-left:29px"></ui-icon>`);

def('data-grid',()=>{const H=['','sepal_length','sepal_width','petal_length','petal_width','species'],HW=[0,132,125,131,124,77];
const R=[['0','5.1','3.5','1.4','0.2','setosa'],['1','4.9','3','1.4','0.2','setosa'],['2','4.7','3.2','1.3','0.2','setosa'],['3','4.6','3.1','1.5','0.2','setosa'],['4','5','3.6','1.4','0.2','setosa']];
const cell=(t,i,c)=>`<div>${t?`<fit-text f="src" s="22" c="${c}" ${i.w?`w="${i.w}"`:''}>${t}</fit-text>`:''}</div>`;
return `<style>:host{display:block;flex:none;box-sizing:border-box;width:823px;height:372px;border:1.500px solid #272a31;border-radius:8px;overflow:hidden}
.r{display:grid;grid-template-columns:89px 160.500px 154.500px 159px 152.500px 1fr;height:61.400px;box-sizing:border-box;border-bottom:1.500px solid #26282f}
.r>div{display:flex;justify-content:flex-end;align-items:center;padding:0 15px 4px 0;border-right:1.500px solid #26282f}
.r>div:last-child{justify-content:flex-start;padding-left:13px;border:0}.h{background:#1a1c24;height:62px}</style>
<div class="r h">${H.map((t,i)=>cell(t,{w:HW[i]},'#9b9ca0')).join('')}</div>${R.map(r=>`<div class="r">${r.map((t,i)=>cell(t,{w:i==5?67:t.length==3?31:0},i?'#fafafa':'#84868b')).join('')}</div>`).join('')}<div class="r" style="border:0"><div></div><div></div><div></div><div></div><div></div><div></div></div>`});

def('tag-chip',e=>`<style>:host{display:flex;align-items:center;box-sizing:border-box;height:49px;width:${e.getAttribute('tw')}px;background:#ff4b4b;border-radius:8px;padding:0 15px 0 14px;color:#fff;justify-content:space-between}</style><fit-text f="src" s="25.500" w="${e.getAttribute('w')}" style="margin-top:-4px"><slot></slot></fit-text><ui-icon name="xb" w="14"></ui-icon>`,
e=>{const f=e.shadowRoot.querySelector('fit-text');f.textContent=e.textContent;f.connectedCallback()});

def('range-slider',`<style>:host{display:block}.l{display:flex;justify-content:space-between;align-items:center;height:29px}
.t{display:flex;align-items:center;justify-content:space-between;height:21px;margin:3px -10.500px 0;background:linear-gradient(#ff4b4b,#ff4b4b) center/calc(100% - 21px) 7px no-repeat}
.t i{width:21px;height:21px;border-radius:50%;background:#ff4b4b}</style>
<div class="l" style="margin:0 -10px"><fit-text f="mono" s="24.500" w="58.500" c="#ff4b4b">4.30</fit-text><fit-text f="mono" s="24.500" w="58.500" c="#ff4b4b">7.90</fit-text></div>
<div class="t"><i></i><i></i></div>
<div class="l" style="margin-top:16px"><fit-text f="mono" s="24.500" w="58.500" c="#fafafa">4.30</fit-text><fit-text f="mono" s="24.500" w="58.500" c="#fafafa">7.90</fit-text></div>`);

/* Histogram with density curve; one count is 17.5px, the origin is the figure's top-left corner */
def('hist-chart',()=>{const y=v=>129+(40-v)*17.5;const B=[[174,284.5,44],[613,722.5,17],[722.5,833,31],[833,943,21],[943,1053,19]];
return `<style>:host{display:block;width:1232px;height:546px;background:#fff;overflow:hidden}svg{display:block}</style>
<svg width="1232" height="546" viewBox="0 0 1232 546" font-family="DejaVu Sans" fill="#111">
${B.map(b=>`<rect x="${b[0]}" y="${y(b[2])}" width="${b[1]-b[0]}" height="900" fill="#8ebad9" stroke="#000" stroke-width="2.600"/>`).join('')}
<path fill="none" stroke="#1f77b4" stroke-width="4.400" d="M176 560C200 510 224 486.600 252 486.600C282 486.600 302 510 330 560M648 560C692 495 752 398.500 813 398.500C875 398.500 935 485 995 560"/>
<rect x="125" y="20.500" width="1085" height="900" fill="none" stroke="#000" stroke-width="2.200"/>
${[40,30,20].map(v=>`<path stroke="#000" stroke-width="2.200" d="M113 ${y(v)}h12"/><text x="104" y="${y(v)+12}" text-anchor="end" font-size="30.500" textLength="38" lengthAdjust="spacingAndGlyphs">${v}</text>`).join('')}
<text transform="translate(47 475) rotate(-90)" font-size="30.500">Count</text></svg>`});

def('app-page',`<style>
:host{display:block;flex:1;min-height:0;position:relative;background:#0e1117;overflow:hidden;color:#fafafa}
.grad{height:4px;background:linear-gradient(90deg,#ff4b4b,#fffd80)}
header{display:flex;align-items:center;justify-content:flex-end;height:82px;padding-right:25px}
main{width:1232px;margin-left:1300px}
.row{display:flex;align-items:center}.bl{display:flex;align-items:baseline}
.sel{display:flex;align-items:center;gap:14px;box-sizing:border-box;height:69px;border-radius:11px;background:#262730;padding:0 22px 0 15px;margin-top:19px}
.full{width:70px;height:70px;border-radius:50%;background:#131720;display:flex;align-items:center;justify-content:center;margin:-10px 0 0 422px;flex:none}
.cb{box-sizing:border-box;width:28px;height:28px;border:2.600px solid #75777b;border-radius:5px;margin-left:4px}
.float{position:absolute;box-sizing:border-box;background:#212121;border:1px solid #2a2a2a;display:flex;align-items:center}
.c{width:64px;height:64px;right:4px;border-radius:50%;justify-content:center;box-shadow:0 0 20px #0006}
.scroll{position:absolute;right:0;top:81px;width:5px;height:803px;background:#54565c;border-radius:3px 0 0 3px}
.man{position:absolute;right:39px;top:1834px;height:32px}
</style>
<div class="grad"></div>
<header><fit-text f="src" s="22.500" w="60" style="margin-top:-4px">Share</fit-text><ui-icon name="star" w="28" style="margin-left:35px"></ui-icon><ui-icon name="pen" w="22" style="margin-left:38px"></ui-icon><ui-icon name="gh" w="29" style="margin-left:37px"></ui-icon><ui-icon name="menu" w="28" h="20" style="margin-left:38px"></ui-icon></header>
<main>
<div class="row" style="height:100px;margin-top:113px"><ui-icon name="flower" w="76" style="margin-left:15px"></ui-icon><div class="bl" style="margin-left:30px"><fit-text f="noto" s="71" b="700" w="835">Исследование датасета</fit-text><fit-text f="src" s="70" b="700" w="110" style="margin-left:12px">Iris</fit-text></div></div>
<div class="row" style="height:50px;margin-top:42px"><ui-icon name="doc" w="38" h="50" style="margin-left:14px"></ui-icon><fit-text f="noto" s="45" b="600" w="505" style="margin-left:24px">Первые строки данных</fit-text></div>
<div style="display:flex;margin-top:33px"><data-grid></data-grid><div class="full"><ui-icon name="expand" w="26"></ui-icon></div></div>
<div class="row" style="height:34px;margin-top:45px"><fit-text f="noto" s="22.500" w="230" style="margin-top:2px">Выберите вид цветка</fit-text></div>
<div class="sel"><tag-chip tw="135" w="76">setosa</tag-chip><tag-chip tw="174" w="115">versicolor</tag-chip><tag-chip tw="159" w="99">virginica</tag-chip><ui-icon name="clear" w="26" style="margin-left:auto"></ui-icon><ui-icon name="caret" w="13" h="7" style="margin-left:2px"></ui-icon></div>
<div class="bl" style="height:34px;margin-top:31px"><fit-text f="noto" s="22.500" w="330" style="line-height:36px">Диапазон длины чашелистика</fit-text><fit-text f="src" s="22.500" w="139" style="margin-left:4px;line-height:30px">(sepal length)</fit-text></div>
<range-slider style="margin-top:13px"></range-slider>
<div class="row" style="height:40px;margin-top:33px"><div class="cb"></div><fit-text f="noto" s="25.500" w="412" style="margin:-1px 0 0 16px">Показать статистическое резюме</fit-text></div>
<div class="row" style="height:50px;margin-top:46px"><ui-icon name="bars" w="50" style="margin-left:9px"></ui-icon><div class="bl" style="margin-left:17px"><fit-text f="noto" s="45" b="600" w="643">Гистограмма длины лепестка</fit-text><fit-text f="src" s="44" b="400" k="1.7" w="279" style="margin-left:12px">(petal length)</fit-text></div></div>
<hist-chart style="margin-top:33px"></hist-chart>
</main>
<div class="scroll"></div>
<div class="float c" style="top:1261px"><ui-icon name="tr" w="28"></ui-icon></div>
<div class="float c" style="top:1338px"><ui-icon name="clover" w="28"></ui-icon></div>
<div class="float" style="top:1416px;right:-2px;width:96px;height:64px;border-radius:32px 0 0 32px;padding-left:14px;box-shadow:0 8px 30px #0008"><ui-icon name="face" w="42"></ui-icon></div>
<div class="man row"><ui-icon name="left" w="13" h="21"></ui-icon><fit-text f="src" s="23" b="400" k=".5" w="124" style="margin:-3px 0 0 33px">Manage app</fit-text></div>`);

def('task-cell',e=>`<style>:host{display:grid;justify-items:center;align-items:center;width:70px;height:70px;box-sizing:border-box;border-radius:10px}
:host([on]){background:#2e2e2f;box-shadow:inset 0 0 0 1.500px #383839}
:host>*{grid-area:1/1}ui-icon,.u,.bd{grid-area:1/1}.u{align-self:end;width:${e.hasAttribute('on')?28:11}px;height:5px;border-radius:3px;background:#9c9c9a;margin-bottom:2px}
.bd{margin:-24px 0 0 31px;z-index:1;width:27px;height:19px;border-radius:5px;background:#a0005e;display:flex;align-items:center;justify-content:center}</style>
<ui-icon name="${e.getAttribute('icon')}" w="${e.getAttribute('w')||42}" h="${e.getAttribute('h')||42}"></ui-icon>${e.hasAttribute('badge')?`<div class="bd"><fit-text s="16" w="24" style="margin-top:-1px">${e.getAttribute('badge')}</fit-text></div>`:''}${e.hasAttribute('idle')?'':'<div class="u"></div>'}`);

def('task-bar',`<style>
:host{display:flex;flex:none;box-sizing:border-box;align-items:center;height:83px;background:#222223;border-top:2px solid #434346;color:#fff}
.w{margin-left:12px;margin-top:-2px;width:147px}
.s{box-sizing:border-box;display:flex;align-items:center;width:383px;height:57px;border-radius:29px;background:#3d3d3f;border:1.500px solid #4a4a4b;border-top:2px solid #5c5c5e;margin-left:26px;padding-left:18px}
.apps{display:flex;gap:7px;margin-left:8px}
.clock{width:127px;display:grid;justify-items:end;margin-top:-2px}
</style>
<ui-icon name="weather" w="42" h="40" style="margin-left:34px;margin-top:-5px"></ui-icon>
<div class="w"><fit-text s="20.500" w="42">18°C</fit-text><fit-text s="20.500" w="147" c="#c4c4c4">В осн. облачно</fit-text></div>
<ui-icon name="win" w="40" h="41" style="margin-left:1083px"></ui-icon>
<div class="s"><ui-icon name="search" w="26"></ui-icon><fit-text s="23.500" w="70" c="#d2d2d2" style="margin-left:19px">Поиск</fit-text></div>
<div class="apps"><task-cell icon="views" h="40" idle></task-cell><task-cell icon="folder" h="38"></task-cell><task-cell icon="yb" on></task-cell><task-cell icon="tg" w="38" h="38" badge="..58"></task-cell><task-cell icon="def" w="39" h="40"></task-cell><task-cell icon="gear"></task-cell><task-cell icon="app" w="40" h="34"></task-cell><task-cell icon="aapp" w="40"></task-cell><task-cell icon="pc"></task-cell><task-cell icon="burst"></task-cell></div>
<ui-icon name="up" w="28" style="margin-left:882px"></ui-icon><ui-icon name="cloud" w="28" h="20" style="margin-left:28px"></ui-icon><fit-text s="20" w="35" style="margin-left:35px">РУС</fit-text><ui-icon name="wifi" w="28" h="22" style="margin-left:35px"></ui-icon><ui-icon name="vol" w="29" h="24" style="margin-left:14px"></ui-icon>
<div class="clock"><fit-text s="20.500" w="39">2:56</fit-text><fit-text s="20.500" w="100">26.05.2025</fit-text></div>`);
</script>
</body>
</html>
